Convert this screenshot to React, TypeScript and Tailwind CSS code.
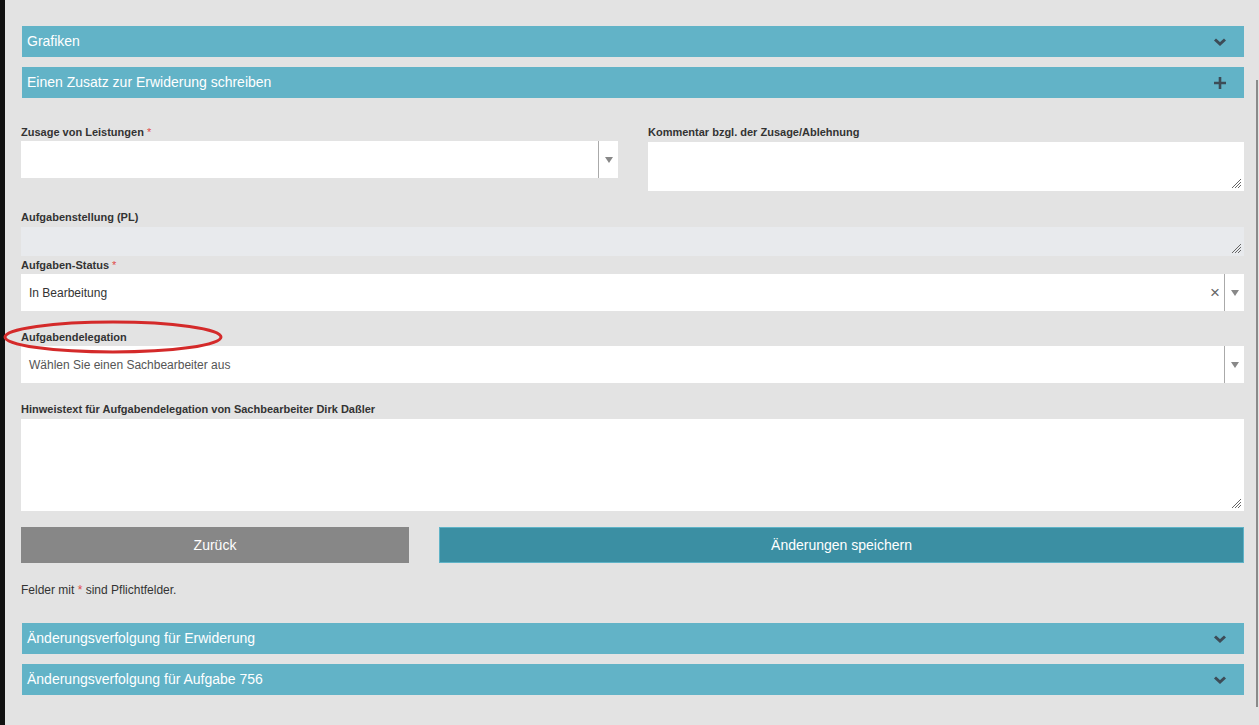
import React from "react";

const font = { fontFamily: '"Liberation Sans", Arial, sans-serif' };

function Chevron() {
  return (
    <svg width="14" height="10" viewBox="0 0 14 10" className="text-[#3d4c57]">
      <path d="M2 2.5 L7 7 L12 2.5" fill="none" stroke="currentColor" strokeWidth="3" />
    </svg>
  );
}

function Plus() {
  return (
    <svg width="14" height="14" viewBox="0 0 14 14" className="text-[#3d4c57]">
      <path d="M7 1 V13 M1 7 H13" fill="none" stroke="currentColor" strokeWidth="2.6" />
    </svg>
  );
}

function Bar({ title, icon }: { title: string; icon: "chevron" | "plus" }) {
  return (
    <div className="ml-px flex h-[31px] items-center justify-between bg-[#62b3c7] pl-[5px] pr-[17px] text-[14px] text-white">
      <span>{title}</span>
      {icon === "chevron" ? <Chevron /> : <Plus />}
    </div>
  );
}

function Label({ text, required }: { text: string; required?: boolean }) {
  return (
    <div className="text-[11px] font-bold leading-[13px] text-[#333]">
      {text}
      {required && <span className="font-normal text-[#e04a4a]"> *</span>}
    </div>
  );
}

function Arrow() {
  return (
    <svg width="8" height="6" viewBox="0 0 8 6">
      <path d="M0 0 H8 L4 6 Z" fill="#888" />
    </svg>
  );
}

function Select({ value, placeholder, clear }: { value?: string; placeholder?: boolean; clear?: boolean }) {
  return (
    <div className="flex h-[37px] items-center bg-white">
      <span className={`flex-1 pl-[8px] text-[12px] ${placeholder ? "text-[#555]" : "text-[#333]"}`}>{value}</span>
      {clear && <span className="pr-[4px] text-[17px] leading-none text-[#666]">×</span>}
      <div className="flex h-full w-[20px] items-center justify-center border-l border-[#aaa]">
        <Arrow />
      </div>
    </div>
  );
}

function Grip() {
  return (
    <svg width="12" height="12" viewBox="0 0 12 12" className="absolute bottom-[2px] right-[2px]">
      <path d="M11 2 L2 11 M11 5 L5 11 M11 8 L8 11" stroke="#666" strokeWidth="1" />
    </svg>
  );
}

function Area({ h, disabled }: { h: string; disabled?: boolean }) {
  return <div className={`relative ${h} ${disabled ? "bg-[#e8eaed]" : "bg-white"}`}><Grip /></div>;
}

export default function App() {
  return (
    <div className="relative flex h-[725px] w-[1259px] overflow-hidden bg-[#e3e3e3]" style={font}>
      <div className="w-[5px] shrink-0 bg-[#111]" />
      <div className="ml-[16px] w-[1223px] pt-[26px]">
        <Bar title="Grafiken" icon="chevron" />
        <div className="mt-[10px]">
          <Bar title="Einen Zusatz zur Erwiderung schreiben" icon="plus" />
        </div>

        <div className="mt-[28px] flex gap-[30px]">
          <div className="w-[597px]">
            <Label text="Zusage von Leistungen" required />
            <div className="mt-[2px] h-[38px]">
              <Select />
            </div>
          </div>
          <div className="flex-1">
            <Label text="Kommentar bzgl. der Zusage/Ablehnung" />
            <div className="mt-[3px]">
              <Area h="h-[49px]" />
            </div>
          </div>
        </div>

        <div className="mt-[20px]">
          <Label text="Aufgabenstellung (PL)" />
          <div className="mt-[3px]">
            <Area h="h-[29px]" disabled />
          </div>
        </div>

        <div className="mt-[3px]">
          <Label text="Aufgaben-Status" required />
          <div className="mt-[2px]">
            <Select value="In Bearbeitung" clear />
          </div>
        </div>

        <div className="mt-[20px]">
          <Label text="Aufgabendelegation" />
          <div className="mt-[2px]">
            <Select value="Wählen Sie einen Sachbearbeiter aus" placeholder />
          </div>
        </div>

        <div className="mt-[20px]">
          <Label text="Hinweistext für Aufgabendelegation von Sachbearbeiter Dirk Daßler" />
          <div className="mt-[3px]">
            <Area h="h-[92px]" />
          </div>
        </div>

        <div className="mt-[16px] flex gap-[30px]">
          <button className="h-[36px] w-[388px] bg-[#878787] text-[14px] text-white">Zurück</button>
          <button className="h-[36px] flex-1 border border-[#5fb3c7] bg-[#3b8fa3] text-[14px] text-white">
            Änderungen speichern
          </button>
        </div>

        <div className="mt-[18px] text-[12px] text-[#333]">
          Felder mit <span className="text-[#e04a4a]">*</span> sind Pflichtfelder.
        </div>

        <div className="mt-[24px]">
          <Bar title="Änderungsverfolgung für Erwiderung" icon="chevron" />
        </div>
        <div className="mt-[10px]">
          <Bar title="Änderungsverfolgung für Aufgabe 756" icon="chevron" />
        </div>
      </div>

      <div className="absolute left-[1256px] top-[80px] h-[627px] w-[2px] bg-[#8a8a8a]" />

      <svg className="pointer-events-none absolute left-[2px] top-[319px]" width="222" height="36" viewBox="0 0 222 36">
        <ellipse cx="111" cy="18" rx="108" ry="15" fill="none" stroke="#d42a2a" strokeWidth="3" />
      </svg>
    </div>
  );
}
